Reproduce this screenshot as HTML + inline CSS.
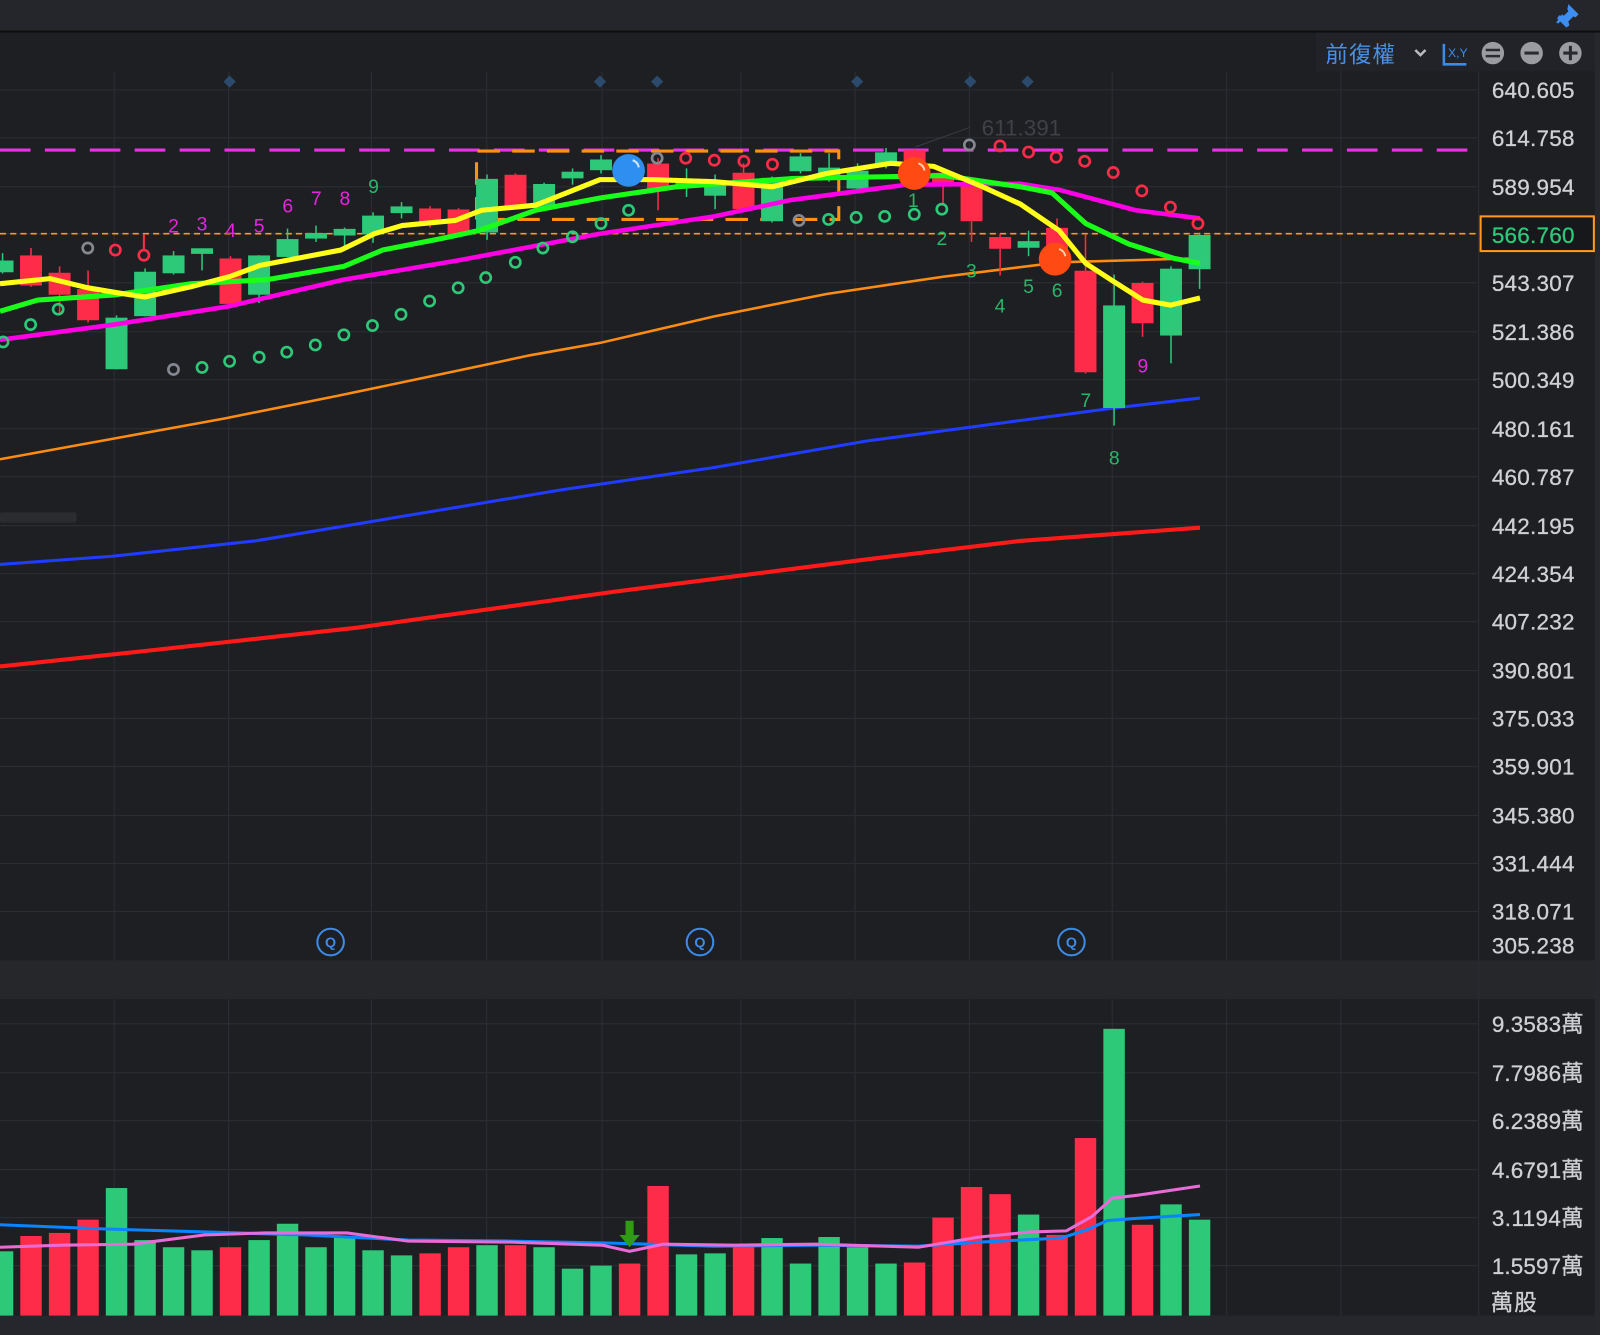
<!DOCTYPE html>
<html><head><meta charset="utf-8"><style>
html,body{margin:0;padding:0;background:#1e1f23;overflow:hidden}
svg{display:block}
text{font-family:"Liberation Sans","Noto Sans CJK TC",sans-serif}
</style></head><body>
<svg width="1600" height="1335" viewBox="0 0 1568 1308" preserveAspectRatio="none" xmlns="http://www.w3.org/2000/svg">
<rect x="0" y="0" width="1568" height="1308" fill="#1e1f23"/>
<rect x="0" y="0" width="1568" height="30" fill="#25262b"/>
<rect x="0" y="30" width="1568" height="2" fill="#0e0f11"/>
<rect x="1290" y="32" width="278" height="38" fill="#222328"/>
<rect x="0" y="941" width="1568" height="38" fill="#25272b"/>
<rect x="0" y="1289" width="1568" height="19" fill="#26272c"/>
<rect x="1563" y="32" width="5" height="1276" fill="#27282d"/>
<g stroke="#2a2c32" stroke-width="1.2">
<line x1="0" y1="88" x2="1448" y2="88"/><line x1="0" y1="135" x2="1448" y2="135"/><line x1="0" y1="183" x2="1448" y2="183"/><line x1="0" y1="229" x2="1448" y2="229"/><line x1="0" y1="277" x2="1448" y2="277"/><line x1="0" y1="325" x2="1448" y2="325"/><line x1="0" y1="372" x2="1448" y2="372"/><line x1="0" y1="420" x2="1448" y2="420"/><line x1="0" y1="467" x2="1448" y2="467"/><line x1="0" y1="515" x2="1448" y2="515"/><line x1="0" y1="562" x2="1448" y2="562"/><line x1="0" y1="609" x2="1448" y2="609"/><line x1="0" y1="657" x2="1448" y2="657"/><line x1="0" y1="704" x2="1448" y2="704"/><line x1="0" y1="751" x2="1448" y2="751"/><line x1="0" y1="799" x2="1448" y2="799"/><line x1="0" y1="846" x2="1448" y2="846"/><line x1="0" y1="893" x2="1448" y2="893"/>
<line x1="0" y1="1003" x2="1448" y2="1003"/><line x1="0" y1="1051" x2="1448" y2="1051"/><line x1="0" y1="1098" x2="1448" y2="1098"/><line x1="0" y1="1146" x2="1448" y2="1146"/><line x1="0" y1="1193" x2="1448" y2="1193"/><line x1="0" y1="1240" x2="1448" y2="1240"/>
</g>
<g stroke="#2a2c32" stroke-width="1.2">
<line x1="112" y1="70" x2="112" y2="941"/><line x1="224" y1="70" x2="224" y2="941"/><line x1="364" y1="70" x2="364" y2="941"/><line x1="477" y1="70" x2="477" y2="941"/><line x1="590" y1="70" x2="590" y2="941"/><line x1="726" y1="70" x2="726" y2="941"/><line x1="838" y1="70" x2="838" y2="941"/><line x1="950" y1="70" x2="950" y2="941"/><line x1="1090" y1="70" x2="1090" y2="941"/><line x1="1202" y1="70" x2="1202" y2="941"/><line x1="1314" y1="70" x2="1314" y2="941"/>
<line x1="112" y1="979" x2="112" y2="1289"/><line x1="224" y1="979" x2="224" y2="1289"/><line x1="364" y1="979" x2="364" y2="1289"/><line x1="477" y1="979" x2="477" y2="1289"/><line x1="590" y1="979" x2="590" y2="1289"/><line x1="726" y1="979" x2="726" y2="1289"/><line x1="838" y1="979" x2="838" y2="1289"/><line x1="950" y1="979" x2="950" y2="1289"/><line x1="1090" y1="979" x2="1090" y2="1289"/><line x1="1202" y1="979" x2="1202" y2="1289"/><line x1="1314" y1="979" x2="1314" y2="1289"/>
<line x1="1449" y1="70" x2="1449" y2="1289"/>
</g>
<rect x="0" y="502" width="75" height="10" rx="2" fill="#2a2c30"/>
<g fill="#2c4a6b">
<path d="M225 74l6 6-6 6-6-6z"/><path d="M588 74l6 6-6 6-6-6z"/><path d="M644 74l6 6-6 6-6-6z"/><path d="M840 74l6 6-6 6-6-6z"/><path d="M951 74l6 6-6 6-6-6z"/><path d="M1007 74l6 6-6 6-6-6z"/>
</g>
<polyline fill="none" stroke="#ff1a1a" stroke-width="4" points="0,653 150,637 350,615 600,580 850,548 1000,530 1176,517"/>
<polyline fill="none" stroke="#1f3cff" stroke-width="3" points="0,553 110,545 250,530 400,505 550,480 700,458 850,432 1000,412 1090,400 1176,390"/>
<polyline fill="none" stroke="#ff8c12" stroke-width="2.5" points="0,450 110,430 220,410 330,388 440,365 520,348 588,336 700,310 810,288 925,271 1038,257 1176,253"/>
<line x1="0" y1="147" x2="1445" y2="147" stroke="#ee2ee8" stroke-width="3" stroke-dasharray="30,14"/>
<line x1="0" y1="229" x2="1450" y2="229" stroke="#ff9a1a" stroke-width="1.6" stroke-dasharray="6,4"/>
<path d="M467 215V148H822V215H467" fill="none" stroke="#ff9112" stroke-width="3" stroke-dasharray="22,12"/>
<g stroke-width="1.5">
<g fill="#2dc878" stroke="#2dc878">
<line x1="2.5" y1="248" x2="2.5" y2="268"/><rect x="-7.5" y="256" width="20" height="10"/>
<line x1="114.2" y1="309" x2="114.2" y2="362"/><rect x="104.2" y="312" width="20" height="49"/>
<line x1="142.2" y1="263" x2="142.2" y2="310"/><rect x="132.2" y="267" width="20" height="42"/>
<line x1="170.1" y1="246" x2="170.1" y2="269"/><rect x="160.1" y="251" width="20" height="16"/>
<line x1="198" y1="244" x2="198" y2="265"/><rect x="188" y="244" width="20" height="4"/>
<line x1="253.9" y1="250" x2="253.9" y2="297"/><rect x="243.9" y="251" width="20" height="37"/>
<line x1="281.8" y1="224" x2="281.8" y2="252"/><rect x="271.8" y="235" width="20" height="16"/>
<line x1="309.7" y1="221" x2="309.7" y2="237"/><rect x="299.7" y="229" width="20" height="4"/>
<line x1="337.7" y1="223" x2="337.7" y2="242"/><rect x="327.7" y="225" width="20" height="5"/>
<line x1="365.6" y1="208" x2="365.6" y2="238"/><rect x="355.6" y="212" width="20" height="17"/>
<line x1="393.5" y1="198" x2="393.5" y2="214"/><rect x="383.5" y="203" width="20" height="5"/>
<line x1="477.3" y1="171" x2="477.3" y2="235"/><rect x="467.3" y="176" width="20" height="51"/>
<line x1="533.2" y1="179" x2="533.2" y2="205"/><rect x="523.2" y="181" width="20" height="22"/>
<line x1="561.1" y1="165" x2="561.1" y2="181"/><rect x="551.1" y="169" width="20" height="5"/>
<line x1="589" y1="152" x2="589" y2="170"/><rect x="579" y="157" width="20" height="9"/>
<line x1="672.8" y1="165" x2="672.8" y2="193"/><rect x="662.8" y="178" width="20" height="4"/>
<line x1="700.8" y1="171" x2="700.8" y2="205"/><rect x="690.8" y="181" width="20" height="10"/>
<line x1="756.6" y1="173" x2="756.6" y2="218"/><rect x="746.6" y="175" width="20" height="41"/>
<line x1="784.5" y1="150" x2="784.5" y2="170"/><rect x="774.5" y="154" width="20" height="13"/>
<line x1="812.5" y1="150" x2="812.5" y2="178"/><rect x="802.5" y="165" width="20" height="6"/>
<line x1="840.4" y1="160" x2="840.4" y2="187"/><rect x="830.4" y="168" width="20" height="16"/>
<line x1="868.3" y1="145" x2="868.3" y2="165"/><rect x="858.3" y="150" width="20" height="10"/>
<line x1="1008" y1="226" x2="1008" y2="251"/><rect x="998" y="237" width="20" height="5"/>
<line x1="1091.8" y1="269" x2="1091.8" y2="417"/><rect x="1081.8" y="300" width="20" height="99"/>
<line x1="1147.6" y1="261" x2="1147.6" y2="356"/><rect x="1137.6" y="264" width="20" height="64"/>
<line x1="1175.6" y1="228" x2="1175.6" y2="283"/><rect x="1165.6" y="231" width="20" height="32"/>
</g>
<g fill="#fe2c48" stroke="#fe2c48">
<line x1="30.4" y1="243" x2="30.4" y2="281"/><rect x="20.4" y="251" width="20" height="28"/>
<line x1="58.4" y1="261" x2="58.4" y2="307"/><rect x="48.4" y="268" width="20" height="20"/>
<line x1="86.3" y1="265" x2="86.3" y2="316"/><rect x="76.3" y="284" width="20" height="29"/>
<line x1="225.9" y1="251" x2="225.9" y2="300"/><rect x="215.9" y="254" width="20" height="43"/>
<line x1="421.5" y1="202" x2="421.5" y2="223"/><rect x="411.5" y="205" width="20" height="14"/>
<line x1="449.4" y1="204" x2="449.4" y2="230"/><rect x="439.4" y="206" width="20" height="23"/>
<line x1="505.2" y1="170" x2="505.2" y2="203"/><rect x="495.2" y="172" width="20" height="29"/>
<line x1="617" y1="155" x2="617" y2="172"/><rect x="607" y="160" width="20" height="6"/>
<line x1="644.9" y1="155" x2="644.9" y2="206"/><rect x="634.9" y="161" width="20" height="23"/>
<line x1="728.7" y1="160" x2="728.7" y2="206"/><rect x="718.7" y="170" width="20" height="34"/>
<line x1="896.3" y1="146" x2="896.3" y2="182"/><rect x="886.3" y="148" width="20" height="29"/>
<line x1="924.2" y1="170" x2="924.2" y2="199"/><rect x="914.2" y="170" width="20" height="8"/>
<line x1="952.1" y1="181" x2="952.1" y2="237"/><rect x="942.1" y="183" width="20" height="33"/>
<line x1="980.1" y1="229" x2="980.1" y2="270"/><rect x="970.1" y="233" width="20" height="10"/>
<line x1="1035.9" y1="214" x2="1035.9" y2="252"/><rect x="1025.9" y="224" width="20" height="28"/>
<line x1="1063.8" y1="230" x2="1063.8" y2="366"/><rect x="1053.8" y="266" width="20" height="98"/>
<line x1="1119.7" y1="276" x2="1119.7" y2="330"/><rect x="1109.7" y="278" width="20" height="38"/>
</g>
</g>
<polyline fill="none" stroke="#ff00e6" stroke-width="4.5" stroke-linejoin="round" points="0,333 112,318 225,300 337,274 450,255 588,229 700,212 775,196 888,181 1000,180 1038,186 1113,206 1176,214"/>
<polyline fill="none" stroke="#19ff19" stroke-width="5" stroke-linejoin="round" points="0,305 37,294 112,289 187,278 262,274 337,261 375,245 431,234 469,226 525,206 588,194 663,183 775,175 925,172 1000,183 1031,189 1064,219 1106,239 1150,253 1176,258"/>
<polyline fill="none" stroke="#ffff1a" stroke-width="5" stroke-linejoin="round" points="0,278 49,273 86,282 116,287 142,291 187,281 225,271 255,260 334,245 367,229 394,221 446,216 472,206 525,201 588,176 640,176 700,178 757,183 810,170 873,160 915,163 963,183 1000,200 1038,226 1064,258 1090,275 1120,294 1147,299 1176,292"/>
<g fill="none" stroke-width="2.6">
<g stroke="#2dc878">
<circle cx="3" cy="335" r="5"/><circle cx="30" cy="318" r="5"/><circle cx="57" cy="303" r="5"/><circle cx="198" cy="360" r="5"/><circle cx="225" cy="354" r="5"/><circle cx="254" cy="350" r="5"/><circle cx="281" cy="345" r="5"/><circle cx="309" cy="338" r="5"/><circle cx="337" cy="328" r="5"/><circle cx="365" cy="319" r="5"/><circle cx="393" cy="308" r="5"/><circle cx="421" cy="295" r="5"/><circle cx="449" cy="282" r="5"/><circle cx="476" cy="272" r="5"/><circle cx="505" cy="257" r="5"/><circle cx="532" cy="243" r="5"/><circle cx="561" cy="232" r="5"/><circle cx="589" cy="219" r="5"/><circle cx="616" cy="206" r="5"/><circle cx="812" cy="215" r="5"/><circle cx="839" cy="213" r="5"/><circle cx="867" cy="212" r="5"/><circle cx="896" cy="210" r="5"/><circle cx="923" cy="205" r="5"/>
</g>
<g stroke="#868891">
<circle cx="86" cy="243" r="5"/><circle cx="170" cy="362" r="5"/><circle cx="644" cy="155" r="5"/><circle cx="783" cy="216" r="5"/><circle cx="950" cy="142" r="5"/>
</g>
<g stroke="#fe2c48">
<circle cx="113" cy="245" r="5"/><circle cx="141" cy="250" r="5"/><circle cx="672" cy="155" r="5"/><circle cx="700" cy="157" r="5"/><circle cx="729" cy="158" r="5"/><circle cx="757" cy="161" r="5"/><circle cx="980" cy="143" r="5"/><circle cx="1008" cy="149" r="5"/><circle cx="1035" cy="154" r="5"/><circle cx="1063" cy="158" r="5"/><circle cx="1091" cy="169" r="5"/><circle cx="1119" cy="187" r="5"/><circle cx="1147" cy="203" r="5"/><circle cx="1174" cy="219" r="5"/>
</g>
</g>
<line x1="141" y1="230" x2="141" y2="245" stroke="#fe2c48" stroke-width="2"/>
<line x1="897" y1="144" x2="950" y2="125" stroke="#3a3c41" stroke-width="1"/>
<text x="962" y="133" font-size="22" fill="#3f4146" textLength="78">611.391</text>
<circle cx="616" cy="167" r="16" fill="#2f8ff0"/><path d="M620 157a9 9 0 0 1 6 7" stroke="#cfe6ff" stroke-width="2" fill="none"/>
<circle cx="896" cy="170" r="16" fill="#ff4a14"/><path d="M900 160a9 9 0 0 1 6 7" stroke="#ffd0b0" stroke-width="2" fill="none"/>
<circle cx="1034" cy="254" r="16" fill="#ff4a14"/><path d="M1038 244a9 9 0 0 1 6 7" stroke="#ffd0b0" stroke-width="2" fill="none"/>
<g font-size="19" text-anchor="middle" fill="#e923e0">
<text x="170" y="228">2</text><text x="198" y="226">3</text><text x="226" y="232">4</text><text x="254" y="228">5</text><text x="282" y="208">6</text><text x="310" y="201">7</text><text x="338" y="201">8</text><text x="1120" y="365">9</text>
</g>
<g font-size="19" text-anchor="middle" fill="#2bb46a">
<text x="366" y="189">9</text><text x="895" y="203">1</text><text x="923" y="240">2</text><text x="952" y="272">3</text><text x="980" y="306">4</text><text x="1008" y="287">5</text><text x="1036" y="291">6</text><text x="1064" y="399">7</text><text x="1092" y="455">8</text>
</g>
<g fill="none" stroke="#3b8be8" stroke-width="2">
<circle cx="324" cy="923" r="13"/><circle cx="686" cy="923" r="13"/><circle cx="1050" cy="923" r="13"/>
</g>
<g font-size="14" font-weight="bold" fill="#3b8be8" text-anchor="middle">
<text x="324" y="928">Q</text><text x="686" y="928">Q</text><text x="1050" y="928">Q</text>
</g>
<g fill="#2dc878">
<rect x="-8" y="1226" width="21" height="63"/><rect x="103.7" y="1164" width="21" height="125"/><rect x="131.7" y="1215" width="21" height="74"/><rect x="159.6" y="1222" width="21" height="67"/><rect x="187.5" y="1225" width="21" height="64"/><rect x="243.4" y="1215" width="21" height="74"/><rect x="271.3" y="1199" width="21" height="90"/><rect x="299.2" y="1222" width="21" height="67"/><rect x="327.2" y="1211" width="21" height="78"/><rect x="355.1" y="1225" width="21" height="64"/><rect x="383" y="1230" width="21" height="59"/><rect x="466.8" y="1220" width="21" height="69"/><rect x="522.7" y="1222" width="21" height="67"/><rect x="550.6" y="1243" width="21" height="46"/><rect x="578.5" y="1240" width="21" height="49"/><rect x="662.3" y="1229" width="21" height="60"/><rect x="690.3" y="1228" width="21" height="61"/><rect x="746.1" y="1213" width="21" height="76"/><rect x="774" y="1238" width="21" height="51"/><rect x="802" y="1212" width="21" height="77"/><rect x="829.9" y="1222" width="21" height="67"/><rect x="857.8" y="1238" width="21" height="51"/><rect x="997.5" y="1190" width="21" height="99"/><rect x="1081.3" y="1008" width="21" height="281"/><rect x="1137.1" y="1180" width="21" height="109"/><rect x="1165.1" y="1195" width="21" height="94"/>
</g>
<g fill="#fe2c48">
<rect x="19.9" y="1211" width="21" height="78"/><rect x="47.9" y="1208" width="21" height="81"/><rect x="75.8" y="1195" width="21" height="94"/><rect x="215.4" y="1222" width="21" height="67"/><rect x="411" y="1228" width="21" height="61"/><rect x="438.9" y="1222" width="21" height="67"/><rect x="494.7" y="1220" width="21" height="69"/><rect x="606.5" y="1238" width="21" height="51"/><rect x="634.4" y="1162" width="21" height="127"/><rect x="718.2" y="1220" width="21" height="69"/><rect x="885.8" y="1237" width="21" height="52"/><rect x="913.7" y="1193" width="21" height="96"/><rect x="941.6" y="1163" width="21" height="126"/><rect x="969.6" y="1170" width="21" height="119"/><rect x="1025.4" y="1210" width="21" height="79"/><rect x="1053.3" y="1115" width="21" height="174"/><rect x="1109.2" y="1200" width="21" height="89"/>
</g>
<polyline fill="none" stroke="#0a84ff" stroke-width="3" points="0,1200 100,1204 200,1207 300,1210 400,1215 500,1216 600,1218 700,1221 800,1220 900,1221 960,1217 1040,1213 1065,1205 1085,1196 1110,1194 1176,1190"/>
<polyline fill="none" stroke="#e86bd8" stroke-width="3" points="0,1222 60,1220 130,1219 200,1210 260,1208 340,1208 400,1216 500,1217 590,1220 617,1226 650,1219 720,1220 800,1219 900,1222 960,1212 1010,1207 1045,1206 1070,1192 1090,1174 1115,1171 1176,1162"/>
<path d="M613 1196h8v14h6l-10 12-10-12h6z" fill="#2f9a12"/>
<g font-size="22" fill="#cfd0d4" stroke="#cfd0d4" stroke-width="0.3">
<text x="1462" y="96" textLength="81">640.605</text><text x="1462" y="143" textLength="81">614.758</text><text x="1462" y="191" textLength="81">589.954</text><text x="1462" y="285" textLength="81">543.307</text><text x="1462" y="333" textLength="81">521.386</text><text x="1462" y="380" textLength="81">500.349</text><text x="1462" y="428" textLength="81">480.161</text><text x="1462" y="475" textLength="81">460.787</text><text x="1462" y="523" textLength="81">442.195</text><text x="1462" y="570" textLength="81">424.354</text><text x="1462" y="617" textLength="81">407.232</text><text x="1462" y="665" textLength="81">390.801</text><text x="1462" y="712" textLength="81">375.033</text><text x="1462" y="759" textLength="81">359.901</text><text x="1462" y="807" textLength="81">345.380</text><text x="1462" y="854" textLength="81">331.444</text><text x="1462" y="901" textLength="81">318.071</text><text x="1462" y="934" textLength="81">305.238</text>
<text x="1462" y="1011" textLength="90">9.3583萬</text><text x="1462" y="1059" textLength="90">7.7986萬</text><text x="1462" y="1106" textLength="90">6.2389萬</text><text x="1462" y="1154" textLength="90">4.6791萬</text><text x="1462" y="1201" textLength="90">3.1194萬</text><text x="1462" y="1248" textLength="90">1.5597萬</text><text x="1461" y="1284" textLength="45">萬股</text>
</g>
<rect x="1451" y="212" width="111" height="34" fill="#17181c" stroke="#ff9a1a" stroke-width="2"/>
<text x="1462" y="238" font-size="22" fill="#2dc878" stroke="#2dc878" stroke-width="0.3" textLength="81">566.760</text>
<text x="1299" y="61" font-size="22" fill="#4a90e2" textLength="68">前復權</text>
<path d="M1387 49l5 5 5-5" fill="none" stroke="#b8babd" stroke-width="2.5"/>
<path d="M1415 43v20h22" fill="none" stroke="#3b8be8" stroke-width="2.5"/>
<text x="1419" y="56" font-size="12" fill="#3b8be8">X,Y</text>
<circle cx="1463" cy="52" r="11" fill="#9a9ca2"/><path d="M1456 49h14M1456 55h14" stroke="#2a2b30" stroke-width="2.5"/>
<circle cx="1501" cy="52" r="11" fill="#9a9ca2"/><path d="M1494 52h14" stroke="#2a2b30" stroke-width="3"/>
<circle cx="1539" cy="52" r="11" fill="#9a9ca2"/><path d="M1532 52h14M1539 45v14" stroke="#2a2b30" stroke-width="3"/>
<g fill="#3d8ef0">
<path d="M1537 4l10 10-3 3-2-1-5 5 1 4-3 2-9-9 2-3 4 1 5-5-1-2z"/>
<path d="M1531 14l-6 8 2 1 7-6z"/>
</g>
</svg>
</body></html>
